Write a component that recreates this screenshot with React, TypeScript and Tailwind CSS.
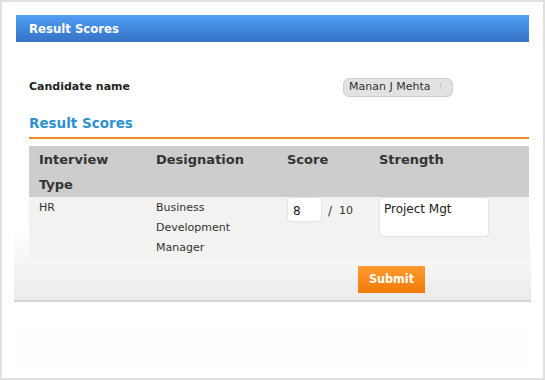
import React from "react";

const verdana = { fontFamily: '"DejaVu Sans", Verdana, sans-serif' };
const tahoma = { fontFamily: '"DejaVu Sans Condensed", "DejaVu Sans", Tahoma, sans-serif' };

export default function App() {
  return (
    <div className="w-[545px] h-[380px] border-2 border-[#e0e0e0] bg-white px-[14px] pt-[13px] box-border" style={verdana}>
      <div className="h-[27px] bg-gradient-to-b from-[#509ef3] to-[#3673c5] flex items-center pl-[13px]">
        <span className="text-white font-bold text-[13px]" style={tahoma}>Result Scores</span>
      </div>
      <div className="bg-gradient-to-b from-white from-[72%] to-[#ebebeb] border-b-2 border-[#d6d6d6] -mx-[2px] px-[2px]">
        <div className="pl-[13px] pt-[36px]">
          <div className="flex items-center h-[19px]">
            <div className="w-[314px] text-[11px] font-bold text-[#222]">Candidate name</div>
            <div className="h-[19px] w-[110px] rounded-[6px] bg-[#e2e2e2] border border-[#cfcfcf] flex items-center pl-[5px] text-[11px] text-[#333]">
              Manan J Mehta<span className="ml-[8px] text-[#b5b5b5] text-[9px]">!</span>
            </div>
          </div>
          <div className="mt-[18px] text-[13.5px] font-bold text-[#2e92d0] leading-[16px]">Result Scores</div>
          <div className="mt-[6px] h-[2px] bg-[#f08a26]" />
          <div className="mt-[7px]">
            <div className="bg-[#cdcdcd] flex pt-[1px] text-[13px] font-bold text-[#333] leading-[25px]">
              <div className="w-[127px] pl-[10px]">Interview<br />Type</div>
              <div className="w-[131px]">Designation</div>
              <div className="w-[92px]">Score</div>
              <div className="flex-1">Strength</div>
            </div>
            <div className="bg-[#f2f2f1] flex h-[61px] text-[11px] text-[#333] leading-[20px] pt-[1px]">
              <div className="w-[127px] pl-[10px]">HR</div>
              <div className="w-[131px]">Business<br />Development<br />Manager</div>
              <div className="w-[92px] flex items-start -mt-[1px]">
                <div className="w-[35px] h-[25px] bg-white border border-[#e4e4e4] rounded-[4px] text-[12px] pl-[5px] leading-[26px] text-[#222]">8</div>
                <span className="ml-[6px] mt-[2px] leading-[24px] text-[12px]">/</span>
                <span className="ml-[7px] mt-[2px] leading-[24px]">10</span>
              </div>
              <div className="flex-1 -mt-[1px]">
                <div className="w-[110px] h-[40px] bg-white border border-[#e2e2e2] rounded-[4px] text-[12px] pl-[4px] pt-[1px] leading-[20px] text-[#222]">Project Mgt</div>
              </div>
            </div>
          </div>
        </div>
        <div className="h-[42px] flex items-center">
          <div className="ml-[342px] w-[67px] h-[27px] bg-gradient-to-b from-[#ff9b2e] to-[#f27a02] flex items-center justify-center text-white text-[12.5px] font-bold" style={tahoma}>
            Submit
          </div>
        </div>
      </div>
      <div className="mt-[28px] h-[34px] bg-[#fdfdfd]" />
    </div>
  );
}
